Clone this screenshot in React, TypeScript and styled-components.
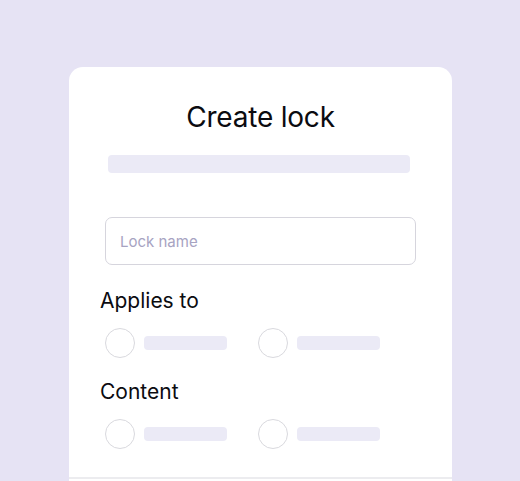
import React from "react";
import styled, { createGlobalStyle } from "styled-components";

const Global = createGlobalStyle`
  html, body {
    margin: 0;
    padding: 0;
    background: #e6e3f4;
    overflow: hidden;
  }
  * { box-sizing: border-box; }
`;

const Page = styled.div`
  width: 520px;
  height: 481px;
  padding: 67px 0 0 69px;
  font-family: Inter, "Noto Sans", sans-serif;
  color: #0b0b10;
  overflow: hidden;
`;

const Card = styled.div`
  width: 383px;
  height: 414px;
  background: #ffffff;
  border-radius: 14px 14px 0 0;
  padding-top: 33px;
  display: flex;
  flex-direction: column;
  overflow: hidden;
`;

const Title = styled.h1`
  margin: 0;
  font-size: 28px;
  line-height: 34px;
  font-weight: 400;
  text-align: center;
  letter-spacing: -0.2px;
`;

const SkeletonBar = styled.div<{ $w: number; $h: number }>`
  width: ${(p) => p.$w}px;
  height: ${(p) => p.$h}px;
  border-radius: 4px;
  background: #ebeaf6;
  flex: none;
`;

const TitleBar = styled(SkeletonBar)`
  margin: 21px 0 0 39px;
`;

const Input = styled.input`
  margin: 44px 0 0 36px;
  width: 311px;
  height: 48px;
  border: 1px solid #d6d5dd;
  border-radius: 7px;
  padding: 0 14px;
  font-family: Inter, "Noto Sans", sans-serif;
  font-size: 15px;
  color: #0b0b10;
  outline: none;
  background: #fff;
  flex: none;
  &::placeholder {
    color: #a7a3c2;
  }
`;

const Label = styled.div<{ $top: number }>`
  margin: ${(p) => p.$top}px 0 0 31px;
  font-size: 21px;
  line-height: 26px;
  font-weight: 400;
`;

const OptionRow = styled.div`
  margin: 14px 0 0 36px;
  display: flex;
  gap: 23px;
`;

const Option = styled.div`
  display: flex;
  align-items: center;
  gap: 9px;
  width: 130px;
`;

const Radio = styled.span`
  width: 30px;
  height: 30px;
  border-radius: 50%;
  border: 1.5px solid #d9d9de;
  flex: none;
`;

const Divider = styled.div`
  margin-top: 28px;
  height: 2px;
  background: #ececef;
  flex: none;
`;

const OptionGroup = () => (
  <OptionRow>
    <Option>
      <Radio />
      <SkeletonBar $w={83} $h={14} />
    </Option>
    <Option>
      <Radio />
      <SkeletonBar $w={83} $h={14} />
    </Option>
  </OptionRow>
);

export default function App() {
  return (
    <>
      <Global />
      <Page>
        <Card>
          <Title>Create lock</Title>
          <TitleBar $w={302} $h={18} />
          <Input placeholder="Lock name" />
          <Label $top={23}>Applies to</Label>
          <OptionGroup />
          <Label $top={21}>Content</Label>
          <OptionGroup />
          <Divider />
        </Card>
      </Page>
    </>
  );
}
